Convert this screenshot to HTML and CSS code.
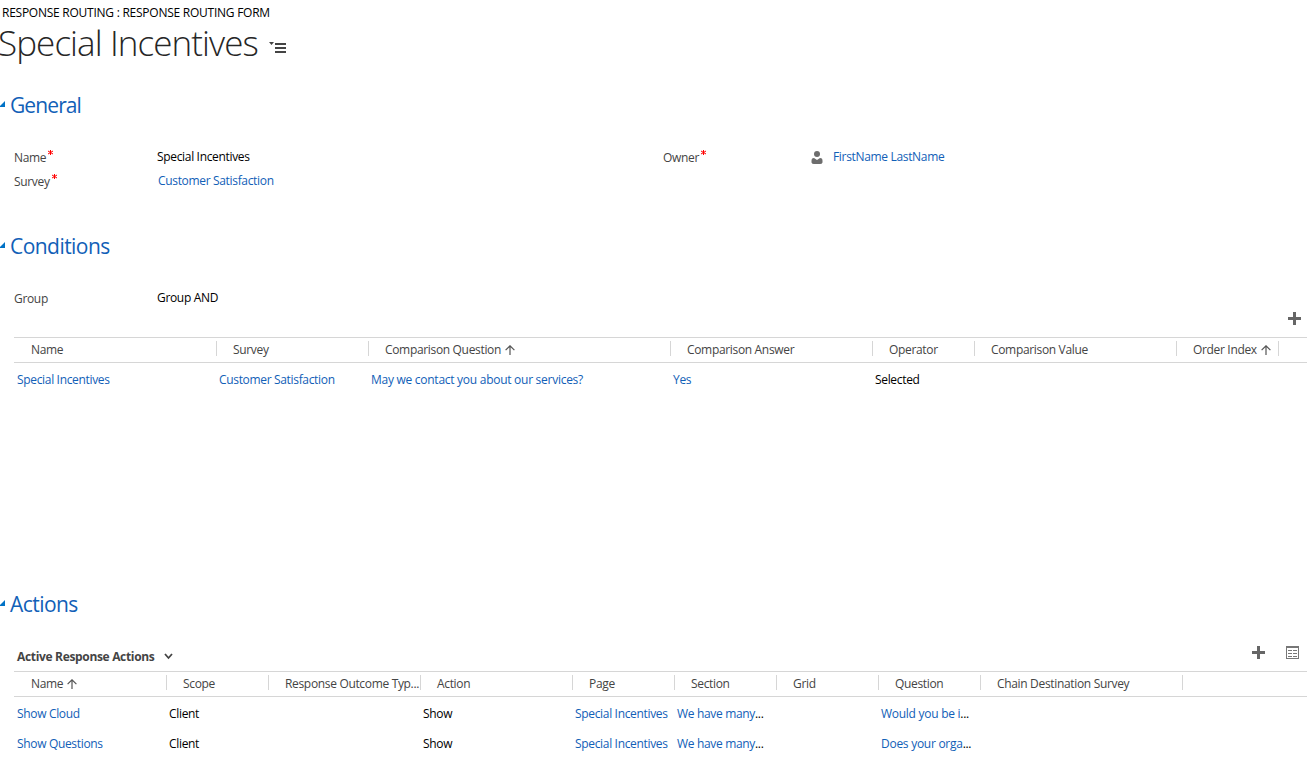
FILE: index.html
```html
<!DOCTYPE html>
<html lang="en">
<head>
<meta charset="utf-8">
<title>Response Routing: Special Incentives</title>
<link rel="stylesheet" href="styles.css">
</head>
<body>
<svg class="defs" width="0" height="0">
  <symbol id="sort" viewBox="0 0 10 10"><path d="M5 10V1M.6 5.200L5 .8 9.400 5.200" fill="none" stroke="#555" stroke-width="1.200"/></symbol>
  <symbol id="plus" viewBox="0 0 13 13"><path d="M5 0h3v5h5v3H8v5H5V8H0V5h5z" fill="#666"/></symbol>
  <symbol id="tri" viewBox="0 0 5 6"><path d="M5 0v6H0V5z" fill="#0072c6"/></symbol>
  <symbol id="req" viewBox="0 0 5 5"><path d="M2.500 0v5M0 1l5 3M5 1L0 4" stroke="#f00" fill="none"/></symbol>
</svg>
<header class="page-head">
  <div class="crumb"><span>RESPONSE ROUTING : RESPONSE ROUTING FORM</span></div>
  <div class="title-row">
    <h1 class="title">Special Incentives</h1>
    <svg class="menu-icon" width="18" height="12" viewBox="0 0 18 12"><path d="M0 0h5L2.500 3zM6 1h11v2H6zM6 5h11v2H6zM6 9h11v2H6z" fill="#444"/></svg>
  </div>
</header>

<section class="section general">
  <h2 class="heading"><svg class="tri" width="5" height="6"><use href="#tri"/></svg><span class="h-general">General</span></h2>
  <div class="fields">
    <div class="col-left">
      <div class="field"><span class="label">Name<svg class="req" width="5" height="5"><use href="#req"/></svg></span><span class="value">Special Incentives</span></div>
      <div class="field"><span class="label">Survey<svg class="req" width="5" height="5"><use href="#req"/></svg></span><a class="value link indent">Customer Satisfaction</a></div>
    </div>
    <div class="col-right">
      <div class="field"><span class="label">Owner<svg class="req" width="5" height="5"><use href="#req"/></svg></span><svg class="person" width="12" height="13" viewBox="0 0 12 13"><circle cx="6" cy="3" r="3" fill="#6d6d6d"/><path d="M3 7l3 2 3-2c2 0 2.500 1 2.500 3v1.500Q11 13 9 13H3Q1 13 .5 11.500V10C.5 8 1 7 3 7z" fill="#6d6d6d"/></svg><a class="value link">FirstName LastName</a></div>
    </div>
  </div>
</section>

<section class="section conditions">
  <h2 class="heading"><svg class="tri" width="5" height="6"><use href="#tri"/></svg><span class="h-conditions">Conditions</span></h2>
  <div class="fields">
    <div class="field"><span class="label">Group</span><span class="value">Group AND</span></div>
  </div>
  <div class="toolbar cond-bar"><svg width="13" height="13"><use href="#plus"/></svg></div>
  <div class="grid">
    <div class="row head cond-cols">
      <span>Name</span><span>Survey</span><span>Comparison Question<svg class="sort" width="10" height="10"><use href="#sort"/></svg></span><span>Comparison Answer</span><span>Operator</span><span>Comparison Value</span><span>Order Index<svg class="sort" width="10" height="10"><use href="#sort"/></svg></span>
    </div>
    <div class="row data cond-cols">
      <span><a class="link">Special Incentives</a></span><span><a class="link">Customer Satisfaction</a></span><span><a class="link wide">May we contact you about our services?</a></span><span><a class="link">Yes</a></span><span>Selected</span><span></span><span></span>
    </div>
  </div>
</section>

<section class="section actions">
  <h2 class="heading"><svg class="tri" width="5" height="6"><use href="#tri"/></svg><span class="h-actions">Actions</span></h2>
  <div class="toolbar view-bar">
    <div class="view"><span>Active Response Actions</span><svg width="9" height="7" viewBox="0 0 9 7"><path d="M1 1l3.500 4L8 1" fill="none" stroke="#444" stroke-width="1.800"/></svg></div>
    <svg width="13" height="13"><use href="#plus"/></svg>
    <svg width="13" height="13" viewBox="0 0 13 13" shape-rendering="crispEdges"><path d="M0 0h13v13H0zM1 2v10h11V2z" fill="#777" fill-rule="evenodd"/><path d="M2 4h4v1H2zM7 4h4v1H7zM2 7h4v1H2zM7 7h4v1H7zM2 10h4v1H2zM7 10h4v1H7z" fill="#777"/></svg>
  </div>
  <div class="grid">
    <div class="row head act-cols">
      <span>Name<svg class="sort" width="10" height="10"><use href="#sort"/></svg></span><span>Scope</span><span>Response Outcome Typ...</span><span>Action</span><span>Page</span><span>Section</span><span>Grid</span><span>Question</span><span>Chain Destination Survey</span>
    </div>
    <div class="row data act-cols">
      <span><a class="link">Show Cloud</a></span><span>Client</span><span></span><span>Show</span><span><a class="link">Special Incentives</a></span><span><a class="link">We have many</a>...</span><span></span><span><a class="link wide">Would you be i</a>...</span><span></span>
    </div>
    <div class="row data act-cols">
      <span><a class="link">Show Questions</a></span><span>Client</span><span></span><span>Show</span><span><a class="link">Special Incentives</a></span><span><a class="link">We have many</a>...</span><span></span><span><a class="link wide">Does your orga</a>...</span><span></span>
    </div>
  </div>
</section>
</body>
</html>
```
FILE: styles.css
```css
* { box-sizing: border-box; }
body {
  margin: 0;
  height: 775px;
  overflow: hidden;
  background: #fff;
  color: #000;
  font: 12px/16px "Open Sans", "Noto Sans", sans-serif;
  letter-spacing: -0.33px;
  white-space: nowrap;
}
.defs { position: absolute; }
svg { flex: none; }
.page-head { height: 90px; padding-top: 5px; }
.crumb { padding-left: 2px; letter-spacing: -0.25px; }
.title-row { display: flex; }
.title {
  margin: 0 0 0 -2px;
  width: 271px;
  font-size: 35px;
  font-weight: 300;
  line-height: 43px;
  letter-spacing: -0.92px;
  color: #262626;
}
.menu-icon { margin-top: 21px; }
.general { height: 141px; }
.conditions { height: 358px; }
.heading {
  display: flex;
  margin: 0;
  height: 55px;
  font-size: 21px;
  font-weight: 400;
  line-height: 30px;
  letter-spacing: -0.55px;
  color: #1160b7;
}
.h-general { letter-spacing: -0.9px; }
.tri { margin: 11px 5px 0 0; }
.fields { display: flex; padding-left: 14px; }
.col-left { width: 649px; }
.field { display: flex; height: 24px; line-height: 26px; }
.label { display: flex; width: 143px; color: #444; }
.req { margin: 5px 0 0 2px; }
.value { line-height: 24px; }
.indent { padding-left: 1px; }
.person { margin: 6px 10px 0 5px; }
.link { color: #1160b7; }
.wide { letter-spacing: -0.27px; }
.toolbar { display: flex; justify-content: flex-end; }
.cond-bar { height: 27px; padding: 2px 8px 0 0; }
.view-bar { height: 27px; gap: 21px; padding: 2px 10px 0 17px; }
.view {
  display: flex;
  align-items: center;
  gap: 10px;
  height: 20px;
  margin-right: auto;
  font-weight: 700;
  color: #444;
}
.view span { padding-top: 2px; }
.grid { margin: 0 2px 0 14px; }
.row { display: grid; }
.cond-cols { grid-template-columns: 203px 152px 302px 202px 102px 202px 102px; }
.act-cols { grid-template-columns: 153px 102px 152px 152px 102px 102px 102px 102px 202px; }
.head {
  height: 26px;
  border: solid #d6d6d6;
  border-width: 1px 0;
  color: #444;
}
.head span {
  height: 15px;
  margin-top: 3px;
  padding-left: 16px;
  border-right: 1px solid #d6d6d6;
  line-height: 18px;
}
.head span:first-child { padding-left: 17px; }
.sort { margin: 0 0 -1px 4px; }
.data { height: 30px; line-height: 34px; }
.data span { padding-left: 2px; }
.data span:first-child { padding-left: 3px; }
```
